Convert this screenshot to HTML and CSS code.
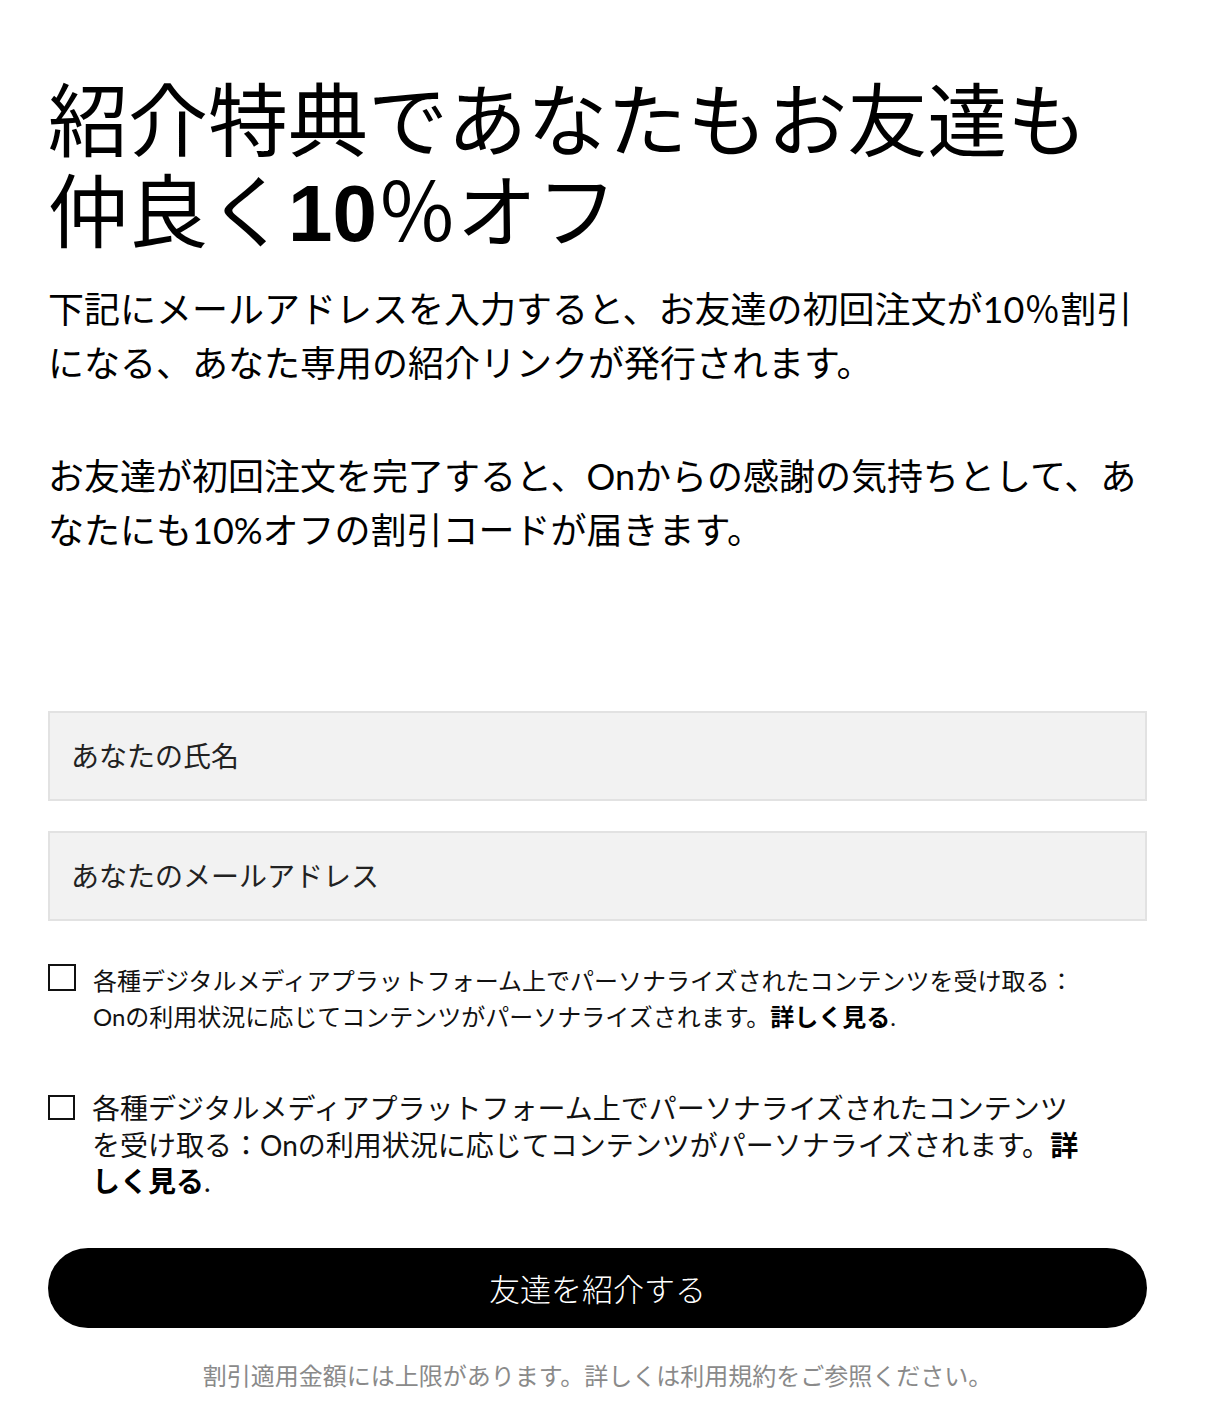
FILE: index.html
```html
<!DOCTYPE html>
<html lang="ja">
<head>
  <meta charset="UTF-8">
  <meta name="viewport" content="width=device-width, initial-scale=1.0">
  <title>紹介特典 - On</title>
  <link rel="stylesheet" href="styles.css">
</head>
<body>
  <main class="referral">
    <h1 class="title">紹介特典であなたもお友達も仲良く<b>10</b>％オフ</h1>

    <p class="lead">下記にメールアドレスを入力すると、お友達の初回注文が10％割引になる、あなた専用の紹介リンクが発行されます。</p>
    <p class="lead">お友達が初回注文を完了すると、Onからの感謝の気持ちとして、あなたにも10%オフの割引コードが届きます。</p>

    <form class="form">
      <input class="field" type="text" placeholder="あなたの氏名">
      <input class="field" type="email" placeholder="あなたのメールアドレス">

      <label class="consent">
        <span class="box"></span>
        <span class="consent-text">各種デジタルメディアプラットフォーム上でパーソナライズされたコンテンツを受け取る：Onの利用状況に応じてコンテンツがパーソナライズされます。<b>詳しく見る</b>.</span>
      </label>

      <label class="consent large">
        <span class="box"></span>
        <span class="consent-text">各種デジタルメディアプラットフォーム上でパーソナライズされたコンテンツを受け取る：Onの利用状況に応じてコンテンツがパーソナライズされます。<b>詳しく見る</b>.</span>
      </label>

      <button class="submit" type="button">友達を紹介する</button>
    </form>

    <p class="note">割引適用金額には上限があります。詳しくは利用規約をご参照ください。</p>
  </main>
</body>
</html>
```

FILE: styles.css
```css
body {
  margin: 0;
  background: #fff;
  color: #000;
  font-family: "Lato", "Noto Sans CJK JP", sans-serif;
}
.referral {
  padding: 77px 61px 0 48px;
}
.title {
  margin: 0 0 23px;
  font-family: "Liberation Sans", "Noto Sans CJK JP", sans-serif;
  font-size: 80px;
  font-weight: normal;
  line-height: 91px;
}
.title b {
  font-weight: bold;
}
.lead {
  margin: 0 0 59px;
  font-size: 36px;
  line-height: 54px;
}
.form {
  display: flex;
  flex-direction: column;
  margin-top: 154px;
}
.field {
  box-sizing: border-box;
  height: 90px;
  margin: 0 0 30px;
  padding: 0 21px;
  border: 2px solid #e2e2e2;
  background: #f2f2f2;
  font-family: inherit;
  font-size: 28px;
  color: #222;
  outline: none;
}
.field::placeholder {
  color: #222;
}
.consent {
  display: flex;
  gap: 17px;
  margin-top: 12px;
  font-size: 24px;
  line-height: 36px;
  color: #111;
}
.consent .box {
  flex: none;
  box-sizing: border-box;
  width: 28px;
  height: 27px;
  margin-top: 1px;
  border: 2px solid #111;
}
.consent-text {
  max-width: 1000px;
}
.consent-text b {
  color: #000;
}
.consent.large {
  margin-top: 55px;
  font-size: 28px;
  line-height: 36.5px;
}
.consent.large .box {
  width: 27px;
  height: 25px;
  margin-top: 5px;
}
.submit {
  height: 80px;
  margin-top: 48px;
  border: none;
  border-radius: 40px;
  background: #000;
  color: #fff;
  font-family: inherit;
  font-size: 31px;
  font-weight: 300;
  cursor: pointer;
}
.note {
  margin: 33px 0 0;
  text-align: center;
  font-size: 24px;
  line-height: 30px;
  color: #8a8a8a;
}
```
